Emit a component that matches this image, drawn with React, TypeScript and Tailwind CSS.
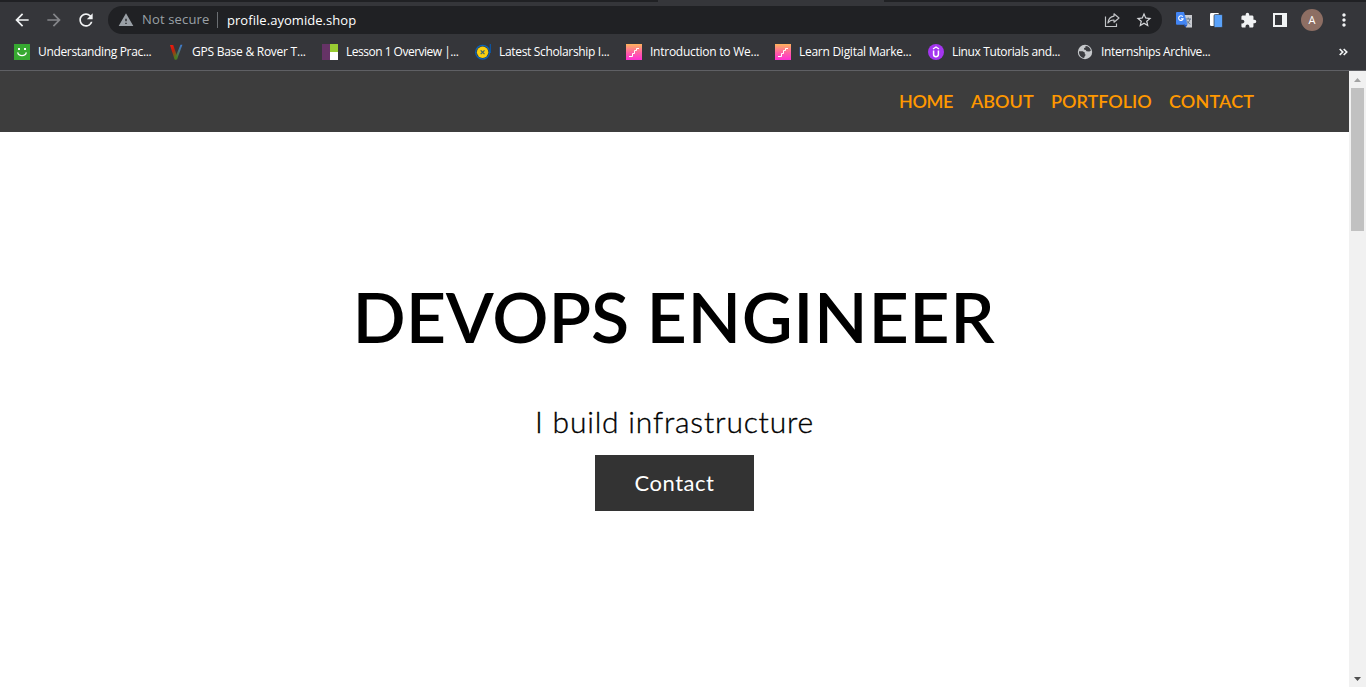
import React, { type ReactNode } from "react";
import {
  MdArrowBack,
  MdArrowForward,
  MdExtension,
  MdMoreVert,
  MdRefresh,
  MdStarBorder,
  MdWarning,
} from "react-icons/md";

function SmileIcon() {
  return (
    <svg className="size-4 shrink-0" viewBox="0 0 16 16">
      <rect width="16" height="16" fill="#37a931" />
      <rect x="4" y="4" width="2" height="2" fill="#fff" />
      <rect x="10" y="4" width="2" height="2" fill="#fff" />
      <path d="M3.7 8.3c.8 4.3 7.8 4.3 8.6 0" fill="none" stroke="#fff" strokeWidth="1.3" />
    </svg>
  );
}

function VIcon() {
  return (
    <svg className="size-4 shrink-0" viewBox="0 0 16 16">
      <defs>
        <linearGradient id="v-left" x2="0.5" y2="1">
          <stop stopColor="#ff1a0a" />
          <stop offset="0.45" stopColor="#c41d0e" />
          <stop offset="1" stopColor="#4d7a1c" />
        </linearGradient>
        <linearGradient id="v-right" x1="1" x2="0.3" y2="1">
          <stop stopColor="#3d7ee0" />
          <stop offset="0.5" stopColor="#4a7480" />
          <stop offset="1" stopColor="#4d7a1c" />
        </linearGradient>
      </defs>
      <path d="M2 1h3.2L9 12l-1 3.5H6.6z" fill="url(#v-left)" />
      <path d="M12.5.8h1.9L9 15.5H7l.6-3z" fill="url(#v-right)" />
    </svg>
  );
}

function BlocksIcon() {
  return (
    <svg className="size-4 shrink-0" viewBox="0 0 16 16">
      <rect width="8" height="16" fill="#663366" />
      <rect x="8" width="8" height="8" fill="#99cc33" />
      <rect x="8" y="8" width="8" height="8" fill="#fff" />
    </svg>
  );
}

function ScholarIcon() {
  return (
    <svg className="size-4 shrink-0" viewBox="0 0 16 16">
      <circle cx="7.6" cy="8.2" r="6.9" fill="#35363a" stroke="#0b62b8" strokeWidth="1.3" />
      <circle cx="7.6" cy="8.2" r="5.7" fill="#f8cf10" />
      <path d="M15.3 0v9" stroke="#0b57a8" strokeWidth="1.2" />
      <path d="m5.7 6.3 3.8 3.8M9.5 6.3l-3.800 3.8" stroke="#3b6470" strokeWidth="1.2" />
    </svg>
  );
}

function StairsIcon() {
  return (
    <svg className="size-4 shrink-0" viewBox="0 0 16 16">
      <defs>
        <linearGradient id="stairs" x2="0" y2="1">
          <stop stopColor="#ffb45c" />
          <stop offset="0.55" stopColor="#ff5fa5" />
          <stop offset="1" stopColor="#ff2fd2" />
        </linearGradient>
      </defs>
      <rect width="16" height="16" fill="url(#stairs)" />
      <path d="M3 12.5h3.5v-3h2v-3h2v-2H13" fill="none" stroke="#fff" strokeWidth="1" />
    </svg>
  );
}

function UIcon() {
  return (
    <svg className="size-4 shrink-0" viewBox="0 0 16 16">
      <circle cx="8" cy="8" r="8" fill="#a435f0" />
      <path d="m5 5 3-2 3 2" fill="none" stroke="#fff" strokeWidth="1.2" />
      <path d="M5.6 6.5v4c0 2.9 4.8 2.9 4.8 0v-4" fill="none" stroke="#fff" strokeWidth="1.5" />
    </svg>
  );
}

function GlobeIcon() {
  return (
    <svg className="size-4 shrink-0" viewBox="0 0 16 16">
      <circle cx="8" cy="8" r="7.2" fill="#c6c8cb" />
      <path d="M2 7.2h3.6l2.2 1.4v1.6l1 .6-1.200 1.700-.5 1.400C3.600 13.600 1.700 10.500 2 7.200z" fill="#3b3c40" />
      <path d="M8.500 2.100c2.600 0 4.900 1.800 5.400 4.600l-1.700.9-2.700-.4-.8-1.300-1.700-.3.100-1.500 1.400-.5z" fill="#3b3c40" />
    </svg>
  );
}

function ShareIcon() {
  return (
    <svg className="size-4" viewBox="0 0 16 16" fill="none" stroke="#c3c5c8" strokeWidth="1.15">
      <path d="M1.5 4.5v10h11v-3" />
      <path d="M10 1.800 15 6l-5 4.200V8C7 7.900 5.200 9 3.900 11 4.300 7.200 6.600 4.600 10 4.100z" strokeLinejoin="round" />
    </svg>
  );
}

function TranslateIcon() {
  return (
    <svg className="size-4" viewBox="0 0 16 16">
      <path d="M6 3h10v12.5h-6z" fill="#c9cbd0" />
      <path d="M9.5 7h5.5M12.2 5.5V7M14 7c-.6 2.5-2 4-3.7 5M10.6 8.5c.8 1.5 2 2.8 3.800 3.7" fill="none" stroke="#60748c" strokeWidth="1" />
      <path d="M1 0h7l3.500 12.800H1a1 1 0 0 1-1-1V1a1 1 0 0 1 1-1z" fill="#4285f4" />
      <path d="M7.5 12.8h4L9.6 15.6z" fill="#2456bd" />
      <path d="M6.8 4.7a2.3 2.3 0 1 0 .4 2H5" fill="none" stroke="#fff" strokeWidth="1.1" />
    </svg>
  );
}

function DeviceIcon() {
  return (
    <svg className="size-4" viewBox="0 0 16 16">
      <rect x="2" y="1" width="9" height="13" rx="1.2" fill="#fff" />
      <rect x="6" y="2.5" width="8.5" height="13" rx="1.3" fill="#5aa2fa" stroke="#35363a" strokeWidth="0.7" />
    </svg>
  );
}

function PanelIcon() {
  return (
    <svg className="size-4" viewBox="0 0 16 16">
      <path d="M1 1h14v14H1zM3 3v10h7V3z" fill="#f1f3f4" fillRule="evenodd" />
    </svg>
  );
}

type Bookmark = { label: string; icon: ReactNode; cell: string };

const bookmarks: Bookmark[] = [
  { label: "Understanding Prac...", icon: <SmileIcon />, cell: "w-[154px] tracking-[-0.34px]" },
  { label: "GPS Base & Rover T...", icon: <VIcon />, cell: "w-[154px] tracking-[-0.25px]" },
  { label: "Lesson 1 Overview |...", icon: <BlocksIcon />, cell: "w-[153px] tracking-[-0.5px]" },
  { label: "Latest Scholarship I...", icon: <ScholarIcon />, cell: "w-[151px] tracking-[-0.33px]" },
  { label: "Introduction to We...", icon: <StairsIcon />, cell: "w-[149px] tracking-[-0.25px]" },
  { label: "Learn Digital Marke...", icon: <StairsIcon />, cell: "w-[153px] tracking-[-0.27px]" },
  { label: "Linux Tutorials and...", icon: <UIcon />, cell: "w-[149px] tracking-[-0.37px]" },
  { label: "Internships Archive...", icon: <GlobeIcon />, cell: "w-[150px] tracking-[-0.35px]" },
];

function Slot({ children }: { children: ReactNode }) {
  return <div className="flex w-8 items-center justify-center">{children}</div>;
}

function Toolbar() {
  return (
    <div className="flex h-9 items-center pr-1.5 pb-0.5 pt-1.5 pl-1.5 text-[#f1f3f4]">
      <Slot><MdArrowBack className="size-5" /></Slot>
      <Slot><MdArrowForward className="size-5 text-[#85868a]" /></Slot>
      <Slot><MdRefresh className="size-5" /></Slot>
      <div className="ml-1.5 flex h-7 w-[1054px] items-center rounded-full bg-[#202124] pl-2.5 text-[13px]">
        <MdWarning className="size-4 text-[#9aa0a6]" />
        <span className="ml-2 w-[75px] whitespace-nowrap tracking-[0.15px] text-[#9aa0a6]">Not secure</span>
        <span className="h-4 w-px bg-[#6b6e72]" />
        <span className="ml-[9px] grow pt-px tracking-[0.05px] text-white">profile.ayomide.shop</span>
        <Slot><ShareIcon /></Slot>
        <Slot><MdStarBorder className="size-[18px] text-[#d5d7da]" /></Slot>
        <span className="w-0.5" />
      </div>
      <div className="ml-1.5 flex items-center">
        <Slot><TranslateIcon /></Slot>
        <Slot><DeviceIcon /></Slot>
        <Slot><MdExtension className="size-[17px]" /></Slot>
        <Slot><PanelIcon /></Slot>
        <Slot>
          <span className="flex size-[22px] items-center justify-center rounded-full bg-[#8d6e63] text-[11px] text-white">A</span>
        </Slot>
        <Slot><MdMoreVert className="size-5" /></Slot>
      </div>
    </div>
  );
}

function BookmarksBar() {
  return (
    <div className="flex h-8 items-center pl-3.5 text-[12px] text-white">
      {bookmarks.map((b) => (
        <div key={b.label} className={`flex shrink-0 items-center gap-2 whitespace-nowrap ${b.cell}`}>
          {b.icon}
          <span>{b.label}</span>
        </div>
      ))}
      <svg className="mr-[18px] ml-auto h-2 w-[9px]" viewBox="0 0 9 8" fill="none" stroke="#f1f3f4" strokeWidth="1.7">
        <path d="m.7 1 3 3-3 3M4.7 1l3 3-3 3" />
      </svg>
    </div>
  );
}

function Scrollbar() {
  return (
    <div className="flex w-[17px] flex-col items-center justify-between bg-[#f1f1f1]">
      <div className="flex flex-col items-center">
        <svg className="h-[17px] w-[17px]" viewBox="0 0 17 17"><path d="M5 11h7L8.5 7z" fill="#a3a3a3" /></svg>
        <div className="h-[143px] w-[13px] bg-[#c1c1c1]" />
      </div>
      <svg className="h-[17px] w-[17px]" viewBox="0 0 17 17"><path d="M5 7h7l-3.5 4z" fill="#505050" /></svg>
    </div>
  );
}

function Site() {
  return (
    <main className="flex grow flex-col bg-white font-[Lato,sans-serif] text-black">
      <nav className="flex h-[61px] bg-[#3d3d3d] pt-[17px] pl-[899px] text-[18px] leading-[27px] font-semibold text-[#ff9800]">
        <a className="w-[72px] tracking-[-0.4px]">HOME</a>
        <a className="w-[80px]">ABOUT</a>
        <a className="w-[118px]">PORTFOLIO</a>
        <a className="tracking-[0.15px]">CONTACT</a>
      </nav>
      <section className="flex flex-col items-center pt-[149px]">
        <h1 className="flex w-[644px] whitespace-nowrap text-[70px] leading-[70px] font-semibold">
          <span className="w-[294px] tracking-[-0.1px]">DEVOPS</span>
          <span className="tracking-[0.6px]">ENGINEER</span>
        </h1>
        <p className="mt-[50px] text-[30px] leading-[40px] font-light tracking-[0.8px] [-webkit-text-stroke:0.35px_black]">
          I build infrastructure
        </p>
        <button className="mt-[14px] h-14 w-[159px] bg-[#333] pb-0.5 text-[22px] tracking-[0.5px] text-white">Contact</button>
      </section>
    </main>
  );
}

export default function App() {
  return (
    <div className="flex h-[687px] w-[1366px] flex-col overflow-hidden bg-[#35363a] font-['Open_Sans',sans-serif]">
      <div className="flex h-0.5 shrink-0 bg-[#202124]">
        <div className="ml-[658px] w-[226px] bg-[#35363a]" />
      </div>
      <div className="-mt-0.5">
        <Toolbar />
      </div>
      <div className="h-[35px] border-b border-[#5f6064]">
        <BookmarksBar />
      </div>
      <div className="flex grow">
        <Site />
        <Scrollbar />
      </div>
    </div>
  );
}
